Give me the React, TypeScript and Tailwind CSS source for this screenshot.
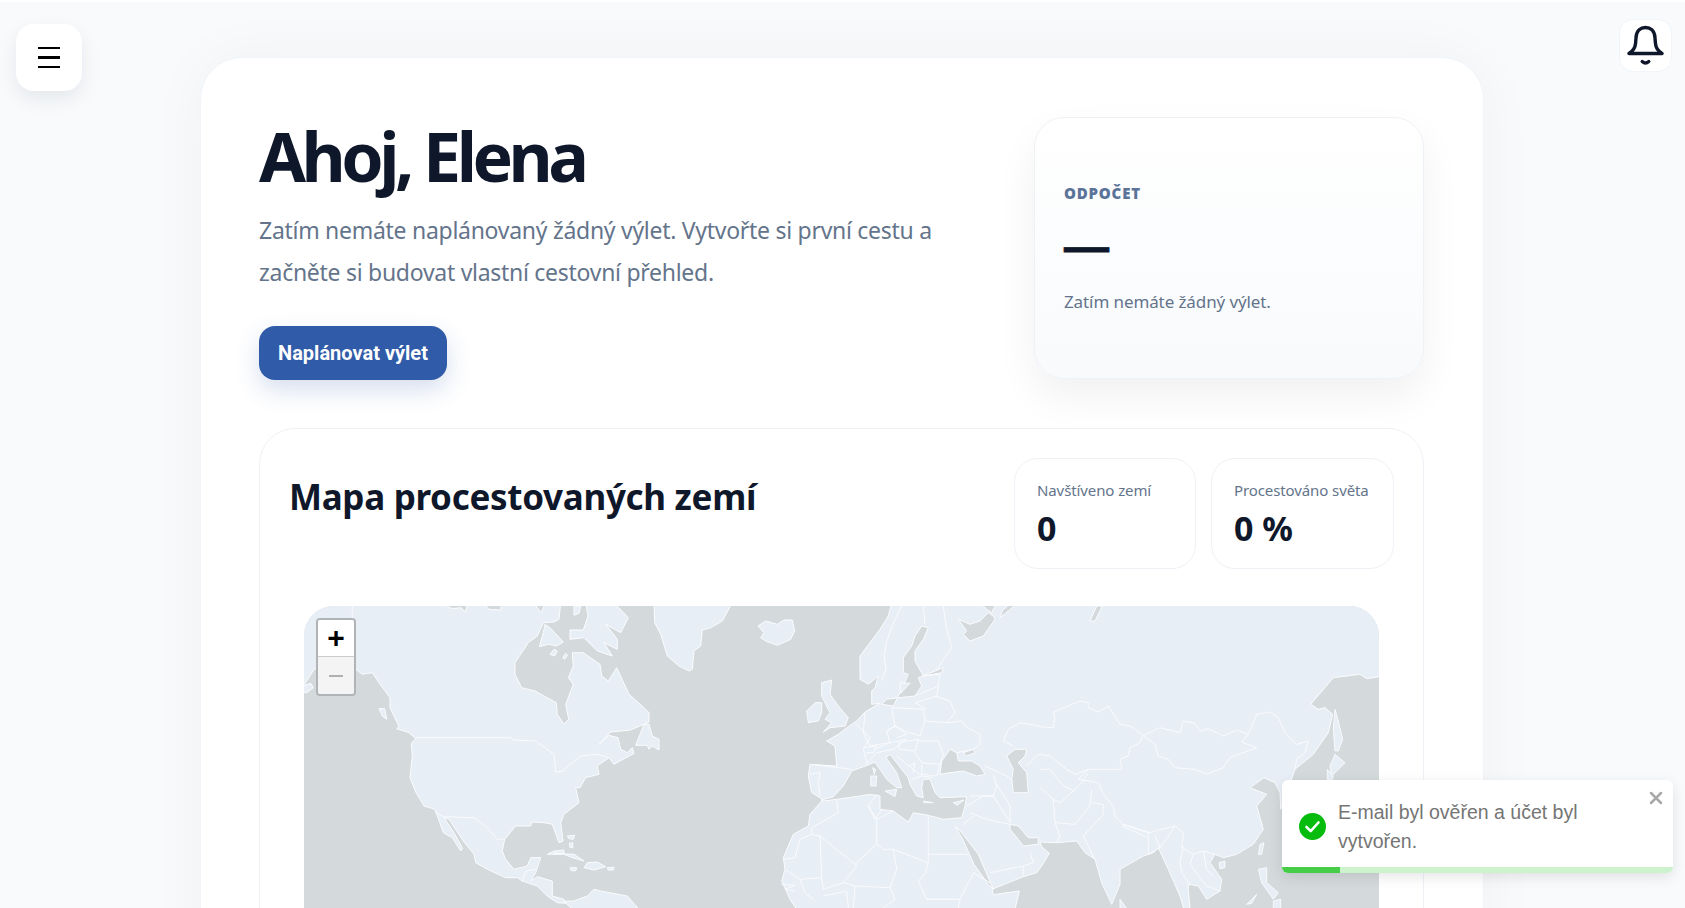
import React from 'react';
import { X } from 'lucide-react';

// crop offsets: map outlines were traced in 3x tiles, each tile starts at one of these x values
const A = 0;
const B = 260;
const C = 476;
const D = 736;

type Seg = [number, string];

const toD = (segs: Seg[], close = true) => {
  const pts = segs.flatMap(([off, s]) =>
    s.split(' ').map((p) => {
      const [x, y] = p.split(',').map(Number);
      return `${(off + x / 3).toFixed(1)} ${(y / 3).toFixed(1)}`;
    })
  );
  return 'M' + pts.join('L') + (close ? 'Z' : '');
};

const land: Seg[][] = [
  // north + central america
  [
    [A, '-10,250 10,222 30,190 100,170 155,190 175,205 205,200 232,240 258,275 258,305 285,362 278,368 315,380 335,398 322,412 325,450 318,515 335,558 360,600 392,610 402,635 418,680 445,695 470,735 476,728 450,680 420,635 435,640 478,705 510,745 515,770 550,790 605,815 640,815 655,825 700,840 730,870 760,890 785,892 780,880 745,870 745,825 700,812 680,825 695,800 710,755 680,755 670,780 630,790 605,760 595,735 602,700 635,660 680,660 685,648 720,650 745,655 765,710 777,705 770,650'],
    [B, '0,625 45,590 35,545 48,545 65,515 105,505 100,480 135,455 150,475 210,442 205,425 190,440 170,430 162,395 135,388 105,415 140,378 200,372 255,348 255,320 240,305 195,265 158,185 133,225 113,210 108,175 58,140 25,140 28,180 13,215 28,235 5,295 14,340 0,355'],
    [A, '760,325 757,290 693,255 653,245 633,205 633,170 673,110 700,90 718,50 750,48 765,40 770,-10 -10,-10'],
  ],
  [[A, '-5,240 20,232 28,245 8,260 -5,258']],
  [[A, '225,308 242,308 248,340 235,330']],
  [[A, '723,55 743,70 778,108 758,120 733,115 706,122 718,80']],
  [[A, '738,145 750,130 760,135 752,150']],
  [[A, '776,155 785,142 791,148 782,160']],
  [[B, '65,-10 150,-10 193,35 170,80 125,55 160,100 160,130 120,110 145,150 100,135 60,95 18,100 18,72 58,72 72,30']],
  [[B, '30,0 50,0 45,22 30,28']],
  // newfoundland, greenland, iceland
  [[B, '215,418 240,355 255,355 265,390 285,400 285,432 265,420 255,430 250,418']],
  [[B, '270,-10 272,50 290,85 310,150 345,180 375,195 385,190 390,135 410,120 415,72 440,65 475,45 505,-10']],
  [[B, '582,60 605,45 640,55 660,42 685,42 692,75 680,100 640,118 605,105 590,95 600,80']],
  // caribbean
  [[A, '730,745 750,735 780,732 780,742 750,742'], [B, '30,745 60,765 25,755 0,745']],
  [[B, '60,785 70,770 100,768 125,782 90,792']],
  [[B, '130,785 150,784 148,792 132,792']],
  [[B, '18,785 38,785 35,794 22,794']],
  [[B, '10,690 32,688 28,700 15,698']],
  [[B, '16,712 26,710 26,726 18,724']],
  // south america
  [[B, '0,886 30,885 70,870 90,850 110,855 190,870 225,910 25,910']],
  // british isles
  [[C, '125,230 155,222 150,265 175,300 205,335 195,360 150,365 130,378 155,350 135,340 150,320 135,290 125,270']],
  [[C, '80,315 105,290 125,290 125,320 115,345 85,350']],
  // eurasia + africa
  [
    [C, '335,-10 325,30 300,70 240,150 240,220 265,235 295,210 285,245 275,255 275,295 300,292 255,318 230,345 205,362 175,385 140,405 165,420 170,480 90,475 85,510 95,560 125,578 125,585 90,625 85,660 40,685 10,755 15,790 5,825 30,880 50,910 705,910 718,855 640,866 636,850 730,812 770,800'],
    [D, '5,780 28,742 5,722 0,708 50,710 110,705 135,740 165,760 185,830 215,895 240,835 240,790 310,750 340,740 355,725 385,790 420,870 432,910 450,910 445,850 445,835 475,840 500,880 540,855 545,820 510,770 525,745 550,755 590,745 640,715 670,670 650,600 680,565 630,545 672,515 705,530 720,560 722,610 765,490 820,445 865,380 878,325 855,305 835,310 812,295 880,215 960,205 980,218 1030,210 1040,-10'],
  ],
];

const seas: Seg[][] = [
  // arctic channels at the top edge
  [[A, '693,-5 700,5 712,20 722,-5']],
  [[A, '420,-5 445,8 470,5 485,18 490,-5']],
  [[A, '540,-5 555,10 590,12 592,-5']],
  // mediterranean
  [[C, '128,581 160,572 190,540 215,495 262,478 285,468 300,490 320,520 350,545 365,545 350,500 318,455 330,445 385,515 390,535 410,570 430,575 425,545 430,520 450,520 465,560 480,575 560,572 555,600 545,635 490,640 445,628 400,620 385,648 340,615 300,610 300,570 270,565 240,570 170,580 130,585']],
  // black sea + azov
  [[C, '480,505 485,465 510,430 530,440 535,465 575,465 600,480 615,505 590,510 550,495 510,500']],
  [[C, '550,440 580,430 585,440 560,450']],
  // caspian
  [[C, '680,450 705,430 740,430 735,450 715,470 740,500 745,560 700,560 695,520 700,490']],
  // baltic
  [[C, '445,65 425,60 405,90 395,120 370,155 370,200 385,205 355,270 340,300 305,295 320,280 355,275 405,270 425,240 415,215 490,185 485,200 430,210 405,165 405,135 430,100']],
  // white sea + barents notches
  [[C, '535,40 570,55 600,45 625,20 640,30 645,40 610,90 570,105 550,85 560,75']],
  [[C, '600,-10 620,10 635,20 650,-10']],
  [[C, '660,35 668,12 695,-10 715,-10 685,15']],
  // red sea, persian gulf
  [[C, '525,660 545,680 595,745 640,850 625,835 582,775 548,700']],
  [[C, '690,655 715,660 745,695 775,695 775,715 730,720 715,700 690,670']],
  // novaya zemlya gap
  [[D, '150,45 170,0 187,0 165,45']],
];

const islands: Seg[][] = [
  [[C, '315,555 350,550 345,572']],
  [[C, '272,510 290,510 288,540 272,540']],
  [[C, '278,485 287,490 283,505']],
  [[C, '430,585 460,590 432,590']],
  [[C, '520,590 552,582 532,598']],
  [[C, '360,230 390,232 362,262']],
  // east asia
  [[D, '885,310 895,345 908,400 895,435 885,435 880,370']],
  [[D, '870,480 885,445 915,470 875,510']],
  [[D, '862,490 880,510 875,525 862,520']],
  [[D, '660,715 672,710 665,745 655,745']],
  [[D, '537,770 555,765 555,785 540,788']],
  [[D, '655,790 680,785 680,830 715,860 700,880 665,830']],
  [[D, '620,895 650,865 635,892']],
  [[D, '700,885 722,880 722,910 700,910']],
  [[D, '240,880 262,910 240,910']],
];

const borders: Seg[][] = [
  // america
  [[A, '145,-5 145,190']],
  [[A, '335,395 620,395 630,402 695,405 750,445 755,498 780,495'], [B, '0,490 50,450 100,445 135,455']],
  [[A, '395,620 420,632 510,635 545,660 580,700 602,700']],
  [[A, '655,825 665,795 695,790']],
  // scandinavia + baltics
  [[C, '365,0 345,40 320,105 312,150 318,190 305,225']],
  [[C, '430,0 435,55']],
  [[C, '490,0 498,60 515,125 470,190']],
  [[C, '430,210 480,205 475,240 405,270']],
  [[C, '475,240 470,270 405,290 440,310']],
  // central + east europe
  [[C, '335,305 430,310 435,345 420,390 375,375 345,360 335,305']],
  [[C, '465,270 510,285 525,320 500,350 435,345']],
  [[C, '500,350 545,345 555,360 600,385 600,415 580,430 530,440']],
  [[C, '345,360 320,375 330,410 270,420 250,380 255,320']],
  [[C, '225,350 270,395 250,430 262,475']],
  [[C, '250,425 290,420 280,440 258,440']],
  [[C, '285,430 330,410 380,400 340,430 290,440 262,470']],
  [[C, '320,375 345,360 380,385 350,395']],
  [[C, '355,410 415,400 405,435 360,430 355,410']],
  [[C, '415,405 475,405 490,445 480,475 425,470 405,440']],
  [[C, '350,450 400,490 425,510']],
  [[C, '425,475 425,505 470,510 480,475']],
  [[C, '395,520 425,510 460,515']],
  [[C, '385,480 405,470 400,500']],
  [[C, '90,505 120,500 115,530 120,570']],
  [[C, '90,475 215,490']],
  // turkey, caucasus, near east
  [[C, '615,480 680,510 700,525']],
  [[C, '640,505 650,540 640,570 570,570']],
  [[C, '560,600 610,570 640,570 690,650']],
  [[C, '570,620 620,640 690,655']],
  [[C, '550,655 580,630']],
  [[C, '650,535 690,600 690,650']],
  [[C, '630,800 730,780 730,810']],
  [[C, '730,780 760,770 750,740']],
  // kazakhstan + central asia
  [[C, '700,420 670,405 685,370 720,350 780,360'], [D, '0,362 40,365 45,335 40,318 120,285 145,290 145,305 175,318 205,300 240,355 270,360 310,388']],
  [[C, '740,480 775,445'], [D, '0,445 30,450 80,490 105,505 145,490']],
  [[D, '0,490 30,490 70,540 105,555']],
  [[D, '145,500 125,530 110,545 60,590 40,580 45,650 105,655 150,600 155,550']],
  [[D, '40,580 0,545']],
  [[D, '45,650 60,690 50,710']],
  [[D, '155,590 190,595 190,625 130,690 145,720 165,760']],
  // mongolia + china
  [[D, '310,388 360,365 420,380 430,345 465,352 480,375 505,368 550,390 590,372 625,385 650,325 690,318 715,335 735,380 770,415 805,405 795,440 770,460 765,490']],
  [[D, '310,388 345,415 355,450 385,460 405,485 465,490 500,505 550,485 570,455 650,425 605,408 625,385']],
  [[D, '310,388 300,410 270,425 265,450 240,460 245,490 180,490 145,490 115,520 175,530 190,565 220,600 225,630 250,655 330,680 355,672 405,660 430,680 425,725 460,745 490,735 525,745']],
  [[D, '245,655 325,680 325,695 245,660']],
  [[D, '325,695 325,745 360,725 345,690']],
  [[D, '405,660 385,690 360,725']],
  [[D, '430,720 420,770 425,800 450,835']],
  [[D, '460,745 450,775 500,840 540,855']],
  [[D, '490,735 500,790 520,810']],
  // africa
  [[C, '170,582 175,620 95,665 95,685 60,700 45,755 10,760']],
  [[C, '95,685 120,690 225,775 290,715 290,640 265,600 290,565']],
  [[C, '265,600 285,640 305,612']],
  [[C, '290,640 340,615']],
  [[C, '445,630 445,770 340,730 310,730 290,715']],
  [[C, '445,745 565,745']],
  [[C, '445,770 437,800 415,825 440,880 540,880 565,830 582,800']],
  [[C, '340,730 350,790 330,845 225,840 190,830 230,780 225,775']],
  [[C, '120,690 125,815 60,820 15,790']],
  [[C, '125,815 130,850 190,830']],
  [[C, '60,820 75,860 100,880']],
  [[C, '130,870 200,855 205,906']],
  [[C, '225,840 220,906']],
  [[C, '330,845 345,880 310,906']],
  [[C, '440,880 500,880 540,880 535,906']],
  [[C, '580,800 630,830']],
  [[C, '5,835 45,838 15,850 45,855']],
];

function WorldMap() {
  return (
    <svg width="1075" height="302" viewBox="0 0 1075 302" className="block">
      <g fill="#e8eef6" stroke="#fbfcfe" strokeWidth="1" strokeLinejoin="round">
        {land.map((s, i) => (
          <path key={i} d={toD(s)} />
        ))}
      </g>
      <g fill="#d4d9dc" stroke="#fbfcfe" strokeWidth="1" strokeLinejoin="round">
        {seas.map((s, i) => (
          <path key={i} d={toD(s)} />
        ))}
      </g>
      <g fill="#e8eef6" stroke="#fbfcfe" strokeWidth="0.9" strokeLinejoin="round">
        {islands.map((s, i) => (
          <path key={i} d={toD(s)} />
        ))}
      </g>
      <g fill="none" stroke="#fbfcfe" strokeWidth="0.9" strokeLinejoin="round">
        {borders.map((s, i) => (
          <path key={i} d={toD(s, false)} />
        ))}
      </g>
    </svg>
  );
}

function StatCard({ label, value, className }: { label: string; value: string; className: string }) {
  return (
    <div className={`h-[111px] rounded-[24px] border border-[#eef2f7] bg-white px-[22px] pt-[19px] ${className}`}>
      <p className="whitespace-nowrap text-[15px] leading-[24px] tracking-[-0.1px] text-[#64748b]">{label}</p>
      <p className="mt-[4px] text-[34px] font-bold leading-[44px] text-[#0f172a]">{value}</p>
    </div>
  );
}

export default function App() {
  return (
    <div className="relative h-[908px] overflow-hidden border-t-2 border-white bg-[#f8fafc] font-['Noto_Sans',sans-serif]">
      {/* menu button */}
      <button className="absolute left-[16px] top-[22px] z-20 flex h-[67px] w-[66px] flex-col items-center justify-center gap-[7px] rounded-[18px] bg-white shadow-[0_8px_20px_rgba(15,23,42,0.08)]">
        <span className="h-[2.5px] w-[22px] bg-black" />
        <span className="h-[2.5px] w-[22px] bg-black" />
        <span className="h-[2.5px] w-[22px] bg-black" />
      </button>

      {/* notifications */}
      <button className="absolute left-[1619px] top-[17px] z-20 flex h-[53px] w-[53px] items-center justify-center rounded-[14px] border border-[#f1f5f9] bg-white">
        <svg width="54" height="53" viewBox="0 0 54 53" fill="none" stroke="#0f172a" strokeWidth="3.6" strokeLinecap="round" strokeLinejoin="round">
          <path d="M9.5 35 Q16 31 16.5 24 L17 18 C17.5 10.5 22 7.5 27 7.5 C32 7.5 36.5 10.5 37 18 L37.5 24 Q38 31 44.5 35 Z" />
          <path d="M23.5 43.5 Q27 46.5 30.5 43.5" />
        </svg>
      </button>

      <main className="ml-[200px] mt-[55px] w-[1284px] rounded-[42px] border border-[#f1f5f9] bg-white p-[58px] pr-[59px] pt-[59px] shadow-[0_0_60px_rgba(15,23,42,0.04)]">
        <section className="flex justify-between">
          <div className="w-[700px]">
            <h1 className="mt-[-3px] text-[68px] font-bold leading-[84px] tracking-[-4.5px] text-[#0f172a]">Ahoj, Elena</h1>
            <p className="mt-[11px] text-[23px] leading-[42px] tracking-[-0.28px] text-[#64748b]">
              Zatím nemáte naplánovaný žádný výlet. Vytvořte si první cestu a začněte si budovat vlastní cestovní přehled.
            </p>
            <button className="mt-[33px] h-[54px] w-[188px] rounded-[16px] bg-[#305ba8] font-['Roboto',sans-serif] text-[20px] font-bold text-white shadow-[0_10px_24px_rgba(48,91,168,0.2)]">
              Naplánovat výlet
            </button>
          </div>

          <div className="flex h-[262px] w-[390px] flex-col rounded-[30px] border border-[#eef2f7] bg-gradient-to-b from-white to-[#f8fafc] px-[29px] pt-[65px] shadow-[0_18px_40px_rgba(15,23,42,0.06)]">
            <p className="text-[15px] font-black uppercase leading-[20px] tracking-[0.8px] text-[#5b7399]">Odpočet</p>
            <p className="mt-[18px] font-['Liberation_Sans',sans-serif] text-[45px] font-bold leading-[52px] text-[#0f172a] [-webkit-text-stroke:0.8px_#0f172a]">—</p>
            <p className="mt-[16px] text-[17px] leading-[26px] tracking-[-0.1px] text-[#64748b]">Zatím nemáte žádný výlet.</p>
          </div>
        </section>

        <section className="mt-[48px] rounded-[36px] border border-[#eef2f7] bg-white p-[29px]">
          <div className="flex items-start justify-between">
            <h2 className="mt-[14px] text-[35px] font-bold leading-[50px] tracking-[-0.3px] text-[#0f172a]">Mapa procestovaných zemí</h2>
            <div className="flex gap-[15px]">
              <StatCard label="Navštíveno zemí" value="0" className="w-[182px]" />
              <StatCard label="Procestováno světa" value="0 %" className="w-[183px]" />
            </div>
          </div>

          <div className="relative mx-[15px] mt-[37px] h-[520px] overflow-hidden rounded-[30px] bg-[#d4d9dc]">
            <WorldMap />
            <div className="absolute left-[12px] top-[12px] w-[40px] overflow-hidden rounded-[4px] border-2 border-[#b0b4b7]">
              <div className="flex h-[37px] items-center justify-center border-b border-[#cccccc] bg-white text-[30px] font-bold leading-none text-black">
                <span className="font-['Liberation_Sans',sans-serif]">+</span>
              </div>
              <div className="flex h-[37px] items-center justify-center bg-[#f4f4f4]">
                <span className="h-[2px] w-[14px] bg-[#b0b0b0]" />
              </div>
            </div>
          </div>
        </section>
      </main>

      {/* toast */}
      <div className="absolute left-[1282px] top-[778px] z-30 h-[93px] w-[391px] overflow-hidden rounded-[6px] bg-white font-['Liberation_Sans',sans-serif] shadow-[0_4px_14px_rgba(0,0,0,0.1)]">
        <div className="flex items-center pl-[17px] pr-[30px] pt-[18px]">
          <svg width="27" height="27" viewBox="0 0 27 27" className="shrink-0 -translate-y-px">
            <circle cx="13.5" cy="13.5" r="13.5" fill="#07bc0c" />
            <path d="M7.5 14 L11.7 18.2 L19.5 9.5" fill="none" stroke="#fff" strokeWidth="2.6" strokeLinecap="round" strokeLinejoin="round" />
          </svg>
          <p className="ml-[12px] text-[19.5px] leading-[29px] text-[#757575]">E-mail byl ověřen a účet byl vytvořen.</p>
        </div>
        <X size={20} strokeWidth={3} className="absolute right-[7px] top-[8px] text-[#a8a8a8]" />
        <div className="absolute bottom-0 left-0 flex h-[6px] w-full bg-[#cdf2ce]">
          <div className="h-full w-[58px] bg-[#45cd48]" />
        </div>
      </div>
    </div>
  );
}
